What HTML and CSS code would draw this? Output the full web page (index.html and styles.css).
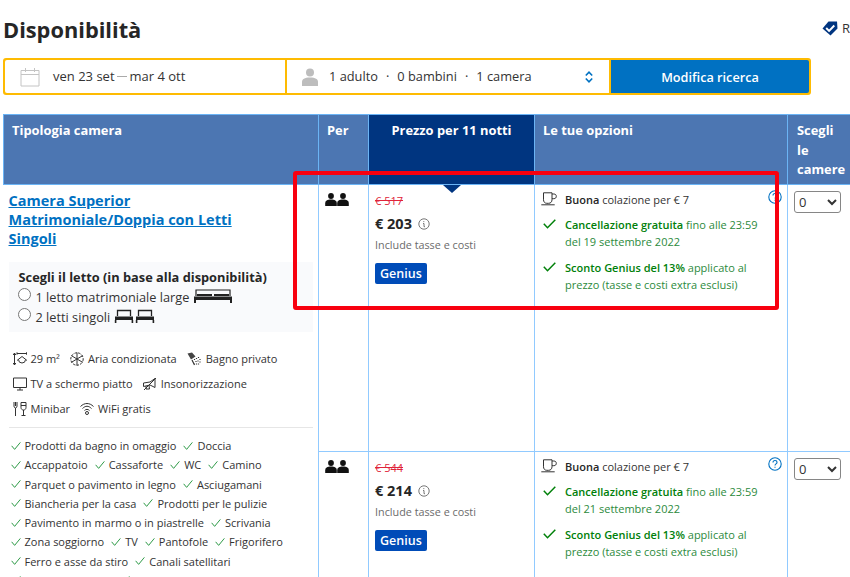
FILE: index.html
```html
<!DOCTYPE html>
<html lang="it">
<head>
<meta charset="utf-8">
<title>Disponibilità</title>
<link rel="stylesheet" href="styles.css">
</head>
<body>
<svg class="defs" width="0" height="0" aria-hidden="true">
  <defs>
    <symbol id="people" viewBox="0 0 24 13"><circle cx="6" cy="3" r="2.900"/><path d="M.2 13v-2.500c0-3 2-4 5.800-4s5.800 1 5.800 4V13z"/><circle cx="18" cy="3" r="2.900"/><path d="M12.200 13v-2.500c0-3 2-4 5.800-4s5.800 1 5.800 4V13z"/></symbol>
    <symbol id="cup" viewBox="0 0 16 14"><path d="M2.500 .8h8.500v7c0 2-1.300 3.500-3.300 3.500H5.800c-2 0-3.300-1.500-3.300-3.500zM11 2h1.800c1.700 0 2.500 1 2.500 2.300s-.8 2.400-2.500 2.400H11M.3 12.800h13.400" fill="none" stroke="#333" stroke-width="1"/></symbol>
    <symbol id="check" viewBox="0 0 13 10"><path d="M.8 4.800l3.700 3.900L12.300 .8" fill="none" stroke="#008009" stroke-width="1.500"/></symbol>
    <symbol id="tick" viewBox="0 0 11 10"><path d="M.7 4.800l3.300 3.900L10.300 1" fill="none" stroke="#2e9a47" stroke-width="1.100"/></symbol>
    <symbol id="info" viewBox="0 0 12 12"><circle cx="6" cy="6" r="5.200" fill="none" stroke="#777" stroke-width="1"/><path d="M5.800 3.100v1M5 5.500h1v3.200h1" fill="none" stroke="#777" stroke-width="1"/></symbol>
    <symbol id="help" viewBox="0 0 14 14"><circle cx="7" cy="7" r="6.200" fill="none" stroke="#0071c2" stroke-width="1.100"/><path d="M5 5.500c0-1.300 1-2 2-2s2 .7 2 1.900c0 1.500-2 1.500-2 3.100M7 9.700v1.100" fill="none" stroke="#0071c2" stroke-width="1.100"/></symbol>
    <symbol id="bed-single" viewBox="0 0 20 14"><path d="M3.500 7V1.500h13V7" fill="none" stroke="#222" stroke-width="1.300"/><path d="M1 7.500h18v3.500H1zM.8 11h1.600v3H.8zM17.600 11h1.600v3h-1.600z" fill="#222"/></symbol>
  </defs>
</svg>

<main class="page">
  <header class="head">
    <h1 class="title">Disponibilità</h1>
    <div class="promise">
      <svg class="promise-icon" viewBox="0 0 16 15"><path d="M6.500 .5H15l.5 7L8.500 14.500.5 7.500z" fill="#003580"/><path d="M4.200 7l2.900 3 5.200-5.500" fill="none" stroke="#fff" stroke-width="1.900"/></svg>
      <span>Ri</span>
    </div>
  </header>

  <form class="search">
    <div class="search-field dates">
      <svg class="cal" viewBox="0 0 20 20"><path d="M1 3.500h18v15.500H1zM1 7.500h18M5.500 1v4M14.500 1v4" fill="none" stroke="#c4c4c4" stroke-width="1"/></svg>
      <span class="date-range">ven 23 set<span class="dash"></span>mar 4 ott</span>
    </div>
    <div class="search-field guests">
      <svg class="guest" viewBox="0 0 16 18"><circle cx="8" cy="4.500" r="4"/><path d="M0 18v-4c0-3 2.500-4.500 8-4.500s8 1.500 8 4.500v4z"/></svg>
      <div class="guest-list">
        <span>1 adulto</span><span>·</span><span>0 bambini</span><span>·</span><span>1 camera</span>
      </div>
      <svg class="updown" viewBox="0 0 8 12"><path d="M.8 4.500L4 1.200l3.200 3.300M.8 7.500L4 10.800l3.200-3.300" fill="none" stroke="#0071c2" stroke-width="1.600"/></svg>
    </div>
    <button class="search-btn" type="button">Modifica ricerca</button>
  </form>

  <table class="rooms">
    <colgroup><col class="c-type"><col class="c-per"><col class="c-price"><col class="c-opt"><col class="c-sel"></colgroup>
    <thead>
      <tr>
        <th>Tipologia camera</th>
        <th>Per</th>
        <th class="th-price">Prezzo per 11 notti<span class="notch"></span></th>
        <th>Le tue opzioni</th>
        <th class="th-sel">Scegli<br>le<br>camere</th>
      </tr>
    </thead>
    <tbody>
      <tr class="row-a">
        <td rowspan="2" class="room">
          <a class="room-name" href="#">Camera Superior Matrimoniale/Doppia con Letti Singoli</a>
          <div class="beds">
            <strong class="beds-title">Scegli il letto (in base alla disponibilità)</strong>
            <label class="bed"><input type="radio" name="bed"><span>1 letto matrimoniale large</span>
              <svg class="bed-l" viewBox="0 0 40 14"><path d="M3 7V1h34v6" fill="none" stroke="#222" stroke-width="1.200"/><path d="M4 5h15v2H4zM21 5h15v2H21zM1 7.500h38V11H1zM1 11h2v3H1zM37 11h2v3h-2z" fill="#222"/></svg>
            </label>
            <label class="bed"><input type="radio" name="bed"><span>2 letti singoli</span>
              <svg class="bed-s"><use href="#bed-single"/></svg>
              <svg class="bed-s"><use href="#bed-single"/></svg>
            </label>
          </div>
          <ul class="facilities">
            <li><svg class="fi" viewBox="0 0 14 14"><path d="M1.500 1v12M.2 3l1.300-2 1.300 2M.2 11l1.300 2 1.300-2M4 1.500h9.500M4 .3v2.400M13.500 .3v2.400M4 8.500l5-4 5 4M5.500 7.500a3.500 3.500 0 1 0 7 0" fill="none" stroke="#333"/></svg>29 m²</li>
            <li><svg class="fi" viewBox="0 0 14 14"><circle cx="7" cy="7" r="6.200" fill="none" stroke="#333" stroke-dasharray="2.500 1.200"/><path d="M7 .5v13M1.400 3.700l11.200 6.600M12.600 3.700L1.400 10.300" fill="none" stroke="#333"/></svg>Aria condizionata</li>
            <li><svg class="fi fi-w" viewBox="0 0 15 14"><path d="M.5 1.500L5 .5l3.500 4-4.500 3z" fill="#444"/><path d="M7.500 7v1M9.500 6v1M11.500 5v1M13 7v1M9 9v1M11 8.500v1M13 9.500v1M7 11v1M9.500 11.500v1M11.500 11.500v1M5 8l2.500 5" fill="none" stroke="#333" stroke-width="1.200"/></svg>Bagno privato</li>
            <li><svg class="fi" viewBox="0 0 14 13"><path d="M.5 .5h13v9.500H.5zM4 12.500h6M7 10v2.500" fill="none" stroke="#333"/></svg>TV a schermo piatto</li>
            <li><svg class="fi" viewBox="0 0 14 14"><path d="M.5 6l6.500-1 5-3.500v9L7 8 .5 9.500zM3 9v3h3.500L6 8.500M1 13L13 1" fill="none" stroke="#333"/></svg>Insonorizzazione</li>
            <li><svg class="fi" viewBox="0 0 14 14"><path d="M1 0v4c0 1.500 1 2 1.500 2v8M4 0v4c0 1.500-1 2-1.500 2M2.500 0v4M8 .5h5v5c0 1.500-1 2.500-2.500 2.500S8 7 8 5.500zM10.500 8v5.500M8.500 13.500h4M8 3.500h5" fill="none" stroke="#333"/></svg>Minibar</li>
            <li><svg class="fi" viewBox="0 0 14 14"><path d="M.5 4.500c4-4 9-4 13 0M2.500 6.500c3-3 6-3 9 0M4.500 8.500c1.500-1.500 3.500-1.500 5 0" fill="none" stroke="#333"/><circle cx="7" cy="11" r="1.500" fill="none" stroke="#333"/></svg>WiFi gratis</li>
          </ul>
          <ul class="extras">
            <li><svg class="tk"><use href="#tick"/></svg>Prodotti da bagno in omaggio</li>
            <li><svg class="tk"><use href="#tick"/></svg>Doccia</li>
            <li><svg class="tk"><use href="#tick"/></svg>Accappatoio</li>
            <li><svg class="tk"><use href="#tick"/></svg>Cassaforte</li>
            <li><svg class="tk"><use href="#tick"/></svg>WC</li>
            <li><svg class="tk"><use href="#tick"/></svg>Camino</li>
            <li><svg class="tk"><use href="#tick"/></svg>Parquet o pavimento in legno</li>
            <li><svg class="tk"><use href="#tick"/></svg>Asciugamani</li>
            <li><svg class="tk"><use href="#tick"/></svg>Biancheria per la casa</li>
            <li><svg class="tk"><use href="#tick"/></svg>Prodotti per le pulizie</li>
            <li><svg class="tk"><use href="#tick"/></svg>Pavimento in marmo o in piastrelle</li>
            <li><svg class="tk"><use href="#tick"/></svg>Scrivania</li>
            <li><svg class="tk"><use href="#tick"/></svg>Zona soggiorno</li>
            <li><svg class="tk"><use href="#tick"/></svg>TV</li>
            <li><svg class="tk"><use href="#tick"/></svg>Pantofole</li>
            <li><svg class="tk"><use href="#tick"/></svg>Frigorifero</li>
            <li><svg class="tk"><use href="#tick"/></svg>Ferro e asse da stiro</li>
            <li><svg class="tk"><use href="#tick"/></svg>Canali satellitari</li>
            <li><svg class="tk"><use href="#tick"/></svg>Bollitore elettrico</li>
            <li><svg class="tk"><use href="#tick"/></svg>Microonde</li>
          </ul>
        </td>
        <td class="per"><svg class="people"><use href="#people"/></svg></td>
        <td class="price">
          <div class="old">€ 517</div>
          <div class="now">€ 203<svg class="info"><use href="#info"/></svg></div>
          <div class="tax">Include tasse e costi</div>
          <span class="genius">Genius</span>
        </td>
        <td class="options">
          <svg class="help"><use href="#help"/></svg>
          <div class="opt"><svg class="cup"><use href="#cup"/></svg><p><b>Buona</b> colazione per € 7</p></div>
          <div class="opt green"><svg class="check"><use href="#check"/></svg><p><b>Cancellazione gratuita</b> fino alle 23:59 del 19 settembre 2022</p></div>
          <div class="opt green"><svg class="check"><use href="#check"/></svg><p><b>Sconto Genius del 13%</b> applicato al prezzo (tasse e costi extra esclusi)</p></div>
        </td>
        <td class="sel"><select class="qty"><option>0</option></select></td>
      </tr>
      <tr class="row-b">
        <td class="per"><svg class="people"><use href="#people"/></svg></td>
        <td class="price">
          <div class="old">€ 544</div>
          <div class="now">€ 214<svg class="info"><use href="#info"/></svg></div>
          <div class="tax">Include tasse e costi</div>
          <span class="genius">Genius</span>
        </td>
        <td class="options">
          <svg class="help"><use href="#help"/></svg>
          <div class="opt"><svg class="cup"><use href="#cup"/></svg><p><b>Buona</b> colazione per € 7</p></div>
          <div class="opt green"><svg class="check"><use href="#check"/></svg><p><b>Cancellazione gratuita</b> fino alle 23:59 del 21 settembre 2022</p></div>
          <div class="opt green"><svg class="check"><use href="#check"/></svg><p><b>Sconto Genius del 13%</b> applicato al prezzo (tasse e costi extra esclusi)</p></div>
        </td>
        <td class="sel"><select class="qty"><option>0</option></select></td>
      </tr>
    </tbody>
  </table>
</main>
<div class="highlight"></div>
</body>
</html>
```
FILE: styles.css
```css
* { box-sizing: border-box; }
html, body { margin: 0; height: 577px; overflow: hidden; background: #fff; }
body { font-family: "Open Sans", "Noto Sans", sans-serif; font-size: 12px; color: #333; position: relative; }
.defs { position: absolute; }
.page { width: 850px; padding: 0 0 0 3px; overflow: hidden; height: 577px; }
.head { display: flex; justify-content: space-between; align-items: center; width: 857px; height: 58px; }
.title { margin: 0; font-size: 21.8px; font-weight: 700; color: #262626; line-height: 56px; margin-top: 2px; }
.promise { display: flex; align-items: center; gap: 4px; width: 38px; color: #333; font-size: 13px; margin-top: -2px; flex: none; white-space: nowrap; }
.promise-icon { width: 16px; height: 15px; flex: none; }

.search { display: flex; width: 808px; height: 37px; background: #febb02; border-radius: 3px; padding: 2px; gap: 2px; }
.search-field { display: flex; align-items: center; background: #fff; font-size: 12.8px; color: #333; white-space: nowrap; }
.dates { width: 280px; padding-left: 15px; gap: 13px; border-radius: 2px 0 0 2px; }
.cal { width: 20px; height: 20px; }
.date-range { display: flex; align-items: center; font-size: 13px; margin-top: -1px; }
.dash { width: 10px; height: 1px; background: #aaa; margin: 0 3px 0 2px; }
.guests { width: 322px; padding-left: 15px; gap: 11px; position: relative; }
.guest { width: 16px; height: 18px; fill: #bdbdbd; }
.guest-list { display: flex; gap: 8px; margin-top: -1px; }
.updown { position: absolute; right: 16px; top: 11px; width: 8px; height: 12px; }
.search-btn { flex: 1; border: 0; background: #0071c2; color: #fff; font: 600 12.7px "Open Sans", sans-serif; border-radius: 0 2px 2px 0; padding: 0; }

.rooms { border-collapse: collapse; table-layout: fixed; width: 860px; margin-top: 19px; }
.c-type { width: 315px; } .c-per { width: 50px; } .c-price { width: 166px; } .c-opt { width: 253px; } .c-sel { width: 76px; }
.rooms th { height: 70px; background: #4c76b2; color: #fff; font-size: 12.9px; font-weight: 700; text-align: left; vertical-align: top; padding: 6px 8px 0; border: 1px solid #6bb4f5; line-height: 19.5px; }
.rooms th.th-price { background: #003580; text-align: center; position: relative; }
.rooms th.th-sel { padding-left: 9px; }
.notch { position: absolute; left: 50%; bottom: -9px; margin-left: -9px; border-style: solid; border-width: 8px 9px 0; border-color: #003580 transparent transparent; }
.rooms td { border: 1px solid #91caff; vertical-align: top; padding: 0; }
.row-a { height: 267px; }
.room { padding: 6px 7px 0 5px !important; border-left: 0 !important; border-bottom: 0 !important; }
.room-name { font-size: 14.5px; line-height: 19px; font-weight: 700; color: #0071c2; display: block; margin-right: 30px; }
.beds { background: #f9fafc; margin-top: 14px; height: 70px; padding: 7px 10px 0; font-size: 12.75px; width: 304px; }
.beds-title { display: block; font-size: 12.8px; line-height: 17px; color: #262626; }
.bed { display: flex; align-items: center; gap: 4px; height: 20px; margin-top: 1px; color: #333; }
.bed + .bed { margin-top: 0; }
.bed input { margin: 0 1px 6px -1px; width: 13px; height: 13px; flex: none; }
.bed-l { width: 40px; height: 14px; margin-top: -3px; }
.bed-s { width: 20px; height: 14px; margin: -2px -3px 0 0; }
.facilities { list-style: none; margin: 0; padding: 14px 0 6px 4px; display: flex; flex-wrap: wrap; gap: 0 10px; width: 285px; font-size: 11px; }
.facilities li { display: flex; align-items: center; gap: 4px; height: 25px; }
.fi { width: 14px; height: 14px; flex: none; }
.fi-w { width: 15px; }
.extras { list-style: none; margin: 0; padding: 8px 0 0 2px; border-top: 1px solid #e6e6e6; width: 304px; display: flex; flex-wrap: wrap; gap: 0 7px; font-size: 11px; }
.extras li { display: flex; align-items: center; gap: 4px; height: 19.25px; }
.tk { width: 10px; height: 10px; flex: none; }
.per { padding: 8px 0 0 6px !important; }
.people { width: 24px; height: 13px; fill: #111; display: block; }
.price { padding: 8px 6px !important; }
.old { color: #e0243a; font-size: 11px; line-height: 16px; text-decoration: line-through; }
.now { font-size: 14.5px; font-weight: 700; line-height: 20px; margin-top: 5px; color: #262626; display: flex; align-items: center; gap: 6px; }
.info { width: 12px; height: 12px; }
.tax { color: #6b6b6b; font-size: 10.8px; line-height: 14px; margin-top: 4px; }
.genius { display: inline-block; background: #004cb8; color: #fff; border-radius: 2px; font-size: 12.5px; font-weight: 600; height: 21px; line-height: 21px; padding: 0 5px; margin-top: 11px; }
.options { position: relative; padding: 6px 6px 0 6px !important; }
.opt { display: flex; gap: 8px; margin-bottom: 8px; font-size: 11px; line-height: 17.5px; }
.opt:first-of-type { margin-bottom: 7px; }
.opt p { margin: 0; width: 200px; }
.opt b { font-weight: 600; color: #262626; }
.green { color: #2c8a3c; }
.green b { color: #008009; }
.cup { width: 16px; height: 14px; flex: none; margin-top: 1px; }
.check { width: 13px; height: 10px; flex: none; margin: 3px 1px 0 2px; }
.help { position: absolute; right: 5px; top: 5px; width: 14px; height: 14px; }
.sel { padding: 6px 0 0 6px !important; border-right: 0 !important; }
.qty { width: 47px; height: 22px; font: 13px "Open Sans", sans-serif; border: 1px solid #868686; border-radius: 3px; background: #fff; color: #333; display: block; }

.highlight { position: absolute; left: 293px; top: 171px; width: 486px; height: 139px; border: 4px solid #f8000f; border-radius: 3px; pointer-events: none; }
```
